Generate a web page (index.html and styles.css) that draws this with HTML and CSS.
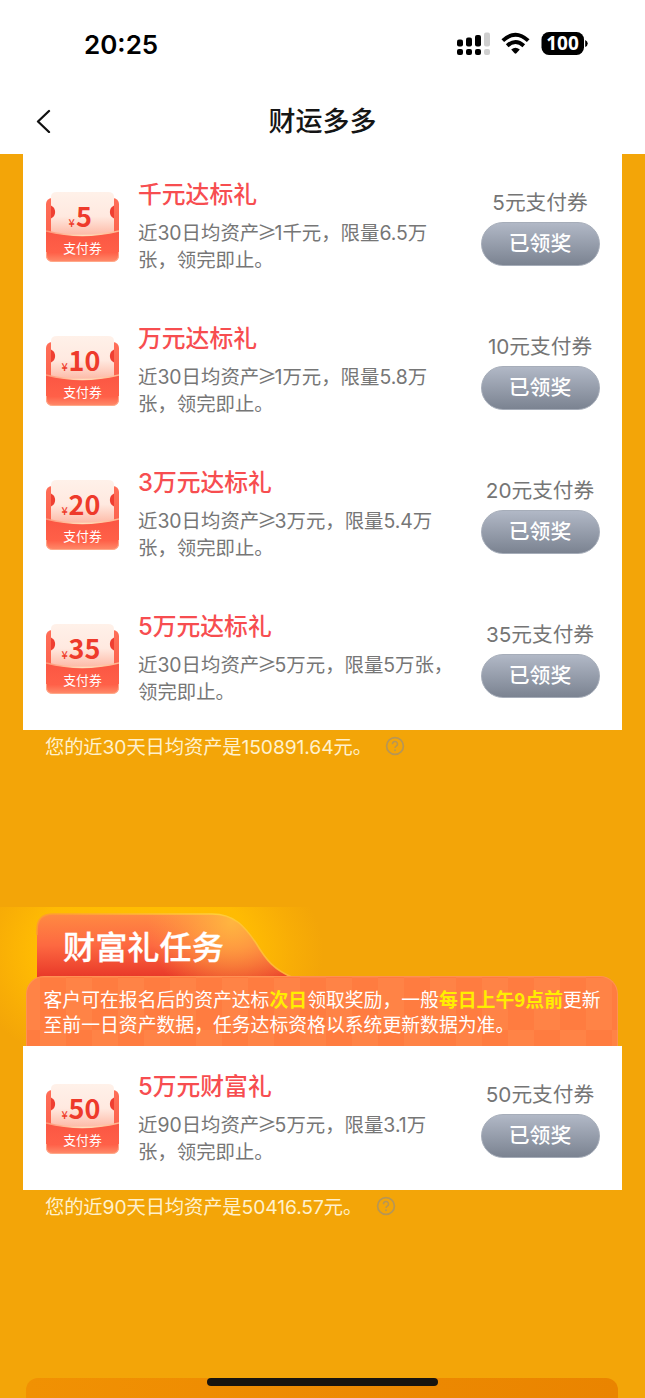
FILE: index.html
```html
<!DOCTYPE html>
<html lang="zh-CN">
<head>
<meta charset="utf-8">
<title>财运多多</title>
<link rel="stylesheet" href="styles.css">
</head>
<body>
<svg width="0" height="0" class="defs">
  <defs>
    <linearGradient id="ticket" x1="0" y1="0" x2="0" y2="1"><stop offset="0" stop-color="#fff1e9"/><stop offset=".55" stop-color="#ffe9e0"/><stop offset="1" stop-color="#fdb8a4"/></linearGradient>
    <linearGradient id="back" x1="0" y1="0" x2="0" y2="1"><stop offset="0" stop-color="#ff6e58"/><stop offset="1" stop-color="#fb604a"/></linearGradient>
    <linearGradient id="pocket" x1="0" y1="0" x2="0" y2="1"><stop offset="0" stop-color="#fb5643"/><stop offset=".7" stop-color="#ff6048"/><stop offset="1" stop-color="#ff8c6b"/></linearGradient>
    <linearGradient id="rim" x1="0" y1="0" x2="1" y2="0"><stop offset="0" stop-color="#ff9274"/><stop offset=".5" stop-color="#ffe0bd"/><stop offset="1" stop-color="#ffb48f"/></linearGradient>
    <symbol id="voucher" viewBox="0 0 73 70">
      <rect x="0" y="6" width="73" height="50" rx="6" fill="url(#back)"/>
      <path d="M5 5Q5 0 11 0H62Q68 0 68 5V44H5Z" fill="url(#ticket)"/>
      <path d="M5 13.500A7.200 7.200 0 0 1 5 26.500Z" fill="#ef3f32"/><path d="M68 13.500A7.200 7.200 0 0 0 68 26.500Z" fill="#ef3f32"/>
      <path d="M0 39Q36 48 73 39V63Q73 70 66 70H7Q0 70 0 63Z" fill="url(#pocket)"/>
      <path d="M0 39Q36 48 73 39" fill="none" stroke="url(#rim)" stroke-width="1.300"/>
      <path d="M.5 60V63Q.5 69.500 7 69.500H66Q72.500 69.500 72.500 63V60" fill="none" stroke="#ffb092" stroke-width=".8"/>
    </symbol>
    <symbol id="help" viewBox="0 0 20 20">
      <circle cx="10" cy="10" r="8.400" fill="none" stroke="#b79656" stroke-width="1.700"/>
      <path d="M7.500 8.200A2.500 2.500 0 1 1 11.300 10.100Q10 10.900 10 12" fill="none" stroke="#b79656" stroke-width="1.500"/><circle cx="10" cy="14.300" r=".95" fill="#b79656"/>
    </symbol>
  </defs>
</svg>
<div class="screen">
  <header class="top">
    <div class="status">
      <span class="time">20:25</span>
      <svg class="signals" width="134" height="30" viewBox="0 -2 134 30">
        <g fill="#000"><rect x="0" y="8.500" width="6" height="7" rx="2"/><rect x="9" y="6.500" width="6" height="9" rx="2"/><rect x="18" y="4" width="6" height="11.500" rx="2"/><rect x="0" y="18" width="6" height="6" rx="2"/><rect x="9" y="18" width="6" height="6" rx="2"/><rect x="18" y="18" width="6" height="6" rx="2"/></g>
        <g fill="#cfcfcf"><rect x="27" y="1.500" width="6" height="14" rx="2"/><rect x="27" y="18" width="6" height="6" rx="2"/></g>
        <g fill="none" stroke="#000" stroke-width="3.900"><path d="M45.800 9.700Q58.500-2.300 71.200 9.700"/><path d="M50.200 14.800Q58.500 7.100 66.800 14.800"/></g><path d="M54.200 18.600Q58.500 14.800 62.800 18.600L59.400 22.200Q58.500 23.100 57.600 22.200Z"/>
        <rect x="84.500" y="1" width="42.500" height="23" rx="7.500"/><path d="M128.200 9Q130.700 10 130.700 12.500T128.200 16Z"/>
        <text class="battery" x="105.500" y="19.300" text-anchor="middle">100</text>
      </svg>
    </div>
    <div class="nav">
      <svg class="back" width="16" height="26" viewBox="0 0 16 26" fill="none" stroke="#111" stroke-width="2.300" stroke-linecap="round" stroke-linejoin="round"><path d="M13 4L2 14.500L13 25"/></svg>
      <h1>财运多多</h1>
    </div>
  </header>

  <main>
    <section class="card">
      <article class="row">
        <svg class="icon" width="73" height="70"><use href="#voucher"/><text class="amt" y="34.500"><tspan class="yen" x="22.500">¥</tspan><tspan x="30">5</tspan></text><text class="lab" x="36.500" y="60.500" text-anchor="middle">支付券</text></svg>
        <div class="info"><h2>千元达标礼</h2><p>近30日均资产<i>≥</i>1千元，限量6.5万<br>张，领完即止。</p></div>
        <div class="prize"><span>5元支付券</span><button>已领奖</button></div>
      </article>
      <article class="row">
        <svg class="icon" width="73" height="70"><use href="#voucher"/><text class="amt" y="34.500"><tspan class="yen" x="15.500">¥</tspan><tspan x="22.500">10</tspan></text><text class="lab" x="36.500" y="60.500" text-anchor="middle">支付券</text></svg>
        <div class="info"><h2>万元达标礼</h2><p>近30日均资产<i>≥</i>1万元，限量5.8万<br>张，领完即止。</p></div>
        <div class="prize"><span>10元支付券</span><button>已领奖</button></div>
      </article>
      <article class="row">
        <svg class="icon" width="73" height="70"><use href="#voucher"/><text class="amt" y="34.500"><tspan class="yen" x="15.500">¥</tspan><tspan x="22.500">20</tspan></text><text class="lab" x="36.500" y="60.500" text-anchor="middle">支付券</text></svg>
        <div class="info"><h2>3万元达标礼</h2><p>近30日均资产<i>≥</i>3万元，限量5.4万<br>张，领完即止。</p></div>
        <div class="prize"><span>20元支付券</span><button>已领奖</button></div>
      </article>
      <article class="row">
        <svg class="icon" width="73" height="70"><use href="#voucher"/><text class="amt" y="34.500"><tspan class="yen" x="15.500">¥</tspan><tspan x="22.500">35</tspan></text><text class="lab" x="36.500" y="60.500" text-anchor="middle">支付券</text></svg>
        <div class="info"><h2>5万元达标礼</h2><p>近30日均资产<i>≥</i>5万元，限量5万张，<br>领完即止。</p></div>
        <div class="prize"><span>35元支付券</span><button>已领奖</button></div>
      </article>
    </section>
    <div class="note first"><span>您的近30天日均资产是150891.64元。</span><svg width="20" height="20"><use href="#help"/></svg></div>

    <div class="wealth">
      <svg class="tab" width="300" height="72" viewBox="0 0 300 72">
        <defs>
          <linearGradient id="tabfill" x1="0" y1="0" x2="0" y2="1"><stop offset="0" stop-color="#ff8a42"/><stop offset=".48" stop-color="#fd6941"/><stop offset="1" stop-color="#e73527"/></linearGradient>
          <radialGradient id="tabglow" gradientUnits="userSpaceOnUse" cx="232" cy="14" r="85"><stop offset="0" stop-color="#ffb640"/><stop offset=".35" stop-color="#ffae40" stop-opacity=".7"/><stop offset="1" stop-color="#ffa040" stop-opacity="0"/></radialGradient>
          <linearGradient id="tabedge" x1="0" y1="0" x2="1" y2="0"><stop offset="0" stop-color="#ff9a30"/><stop offset=".7" stop-color="#ffcf3b"/><stop offset="1" stop-color="#ffb133"/></linearGradient>
        </defs>
        <path d="M37 72V23Q37 7 53 7H212C235 7 245 20 256 36C266 53 274 63 294 71V72Z" fill="url(#tabfill)"/>
        <path d="M37 72V23Q37 7 53 7H212C235 7 245 20 256 36C266 53 274 63 294 71V72Z" fill="url(#tabglow)"/>
        <path d="M37 28V23Q37 7 53 7H212C235 7 245 20 256 36C266 53 274 63 294 71" fill="none" stroke="url(#tabedge)" stroke-width="1.500"/>
        <text class="tabtitle" x="63" y="51.500">财富礼任务</text>
      </svg>
      <div class="banner">客户可在报名后的资产达标<b>次日</b>领取奖励，一般<b>每日上午9点前</b>更新<br>至前一日资产数据，任务达标资格以系统更新数据为准。</div>
    </div>
    <section class="card">
      <article class="row">
        <svg class="icon" width="73" height="70"><use href="#voucher"/><text class="amt" y="34.500"><tspan class="yen" x="15.500">¥</tspan><tspan x="22.500">50</tspan></text><text class="lab" x="36.500" y="60.500" text-anchor="middle">支付券</text></svg>
        <div class="info"><h2>5万元财富礼</h2><p>近90日均资产<i>≥</i>5万元，限量3.1万<br>张，领完即止。</p></div>
        <div class="prize"><span>50元支付券</span><button>已领奖</button></div>
      </article>
    </section>
    <div class="note"><span>您的近90天日均资产是50416.57元。</span><svg width="20" height="20"><use href="#help"/></svg></div>
  </main>
  <footer class="next"><div class="home"></div></footer>
</div>
</body>
</html>
```
FILE: styles.css
```css
* { box-sizing: border-box; margin: 0; padding: 0; }
body { width: 645px; height: 1398px; overflow: hidden; background: #f3a508; font-family: Inter, "Noto Sans CJK SC", sans-serif; }
.defs { position: absolute; }
.screen { width: 645px; height: 1398px; display: flex; flex-direction: column; }
.top { height: 154px; background: #fff; flex: none; }
.status { height: 88px; padding: 0 56px 0 84px; display: flex; align-items: center; justify-content: space-between; }
.time { font-size: 26px; font-weight: 600; color: #000; }
.signals { margin-right: -2px; overflow: visible; }
.battery { font: 700 19px "Open Sans", sans-serif; fill: #fff; }
.nav { height: 64px; display: grid; grid-template-columns: 1fr auto 1fr; align-items: center; padding-left: 36px; padding-right: 36px; }
.nav h1 { font: 500 27px/40px "Noto Sans CJK SC", sans-serif; color: #151515; }
main { flex: 1; }
.card { width: 599.500px; margin-left: 22.500px; background: #fff; }
.row { height: 144px; display: flex; padding: 0 23px 0 23.500px; }
.icon { flex: none; margin-top: 38px; }
.amt { font: 700 27px "Noto Sans CJK SC", sans-serif; fill: #ee3a2b; }
.yen { font-size: 11px; font-weight: 500; }
.lab { font: 400 12.800px "Noto Sans CJK SC", sans-serif; fill: #fff; }
.info { margin-left: 19px; padding-top: 25px; white-space: nowrap; flex: 1; }
.info h2 { font-size: 23.800px; line-height: 32px; font-weight: 500; color: #f74d50; }
.info p { margin-top: 7px; font-size: 19.400px; line-height: 27px; color: #767676; }
.info i { font-family: "Noto Sans CJK SC", sans-serif; font-style: normal; margin: 0 -2px; }
.prize { width: 118px; flex: none; display: flex; flex-direction: column; align-items: center; padding-top: 34px; white-space: nowrap; }
.prize span { font-size: 20.700px; line-height: 30px; color: #757575; }
.prize button { width: 119px; height: 44px; margin-top: 4px; border: 1.500px solid #a6adb9; border-radius: 22px; background: linear-gradient(#b1b8c6, #7b8391); color: #fff; font: 500 20.800px/37px "Noto Sans CJK SC", sans-serif; padding-bottom: 3px; }
.note { height: 32px; padding-left: 45px; display: flex; align-items: center; gap: 13.500px; font-size: 19.300px; letter-spacing: -.1px; font-weight: 400; color: #fff1cd; white-space: nowrap; }
.first { margin-bottom: 145px; }
.wealth { height: 139px; background: radial-gradient(ellipse 180px 125px at 143px 45px, #ffc000 0, #ffbb03 60%, #f8ad06 83%, #f3a508 100%); }
.tab { display: block; }
.tabtitle { font: 500 32.200px "Noto Sans CJK SC", sans-serif; fill: #fff; stroke: #fff; stroke-width: .3px; }
.banner { position: relative; width: 592px; height: 70px; margin: -3px 0 0 26px; border-radius: 18px 18px 0 0; border: 1.500px solid #ff9154; border-bottom: 0; background: repeating-conic-gradient(#ff7c40 0 25%, #ff8346 0 50%) 14px -50px / 52px 104px; background-origin: border-box; padding: 9px 0 0 16.500px; white-space: nowrap; font: 400 18.830px/25px "Noto Sans CJK SC", sans-serif; color: #fff; }
.banner b { color: #ffee00; }
.next { height: 20px; width: 592px; margin-left: 26px; border-radius: 12px 12px 0 0; background: linear-gradient(90deg, #f19103, #ea8400); display: flex; padding-left: 181px; }
.home { width: 231px; height: 8px; border-radius: 4px; background: #18140f; }
```
